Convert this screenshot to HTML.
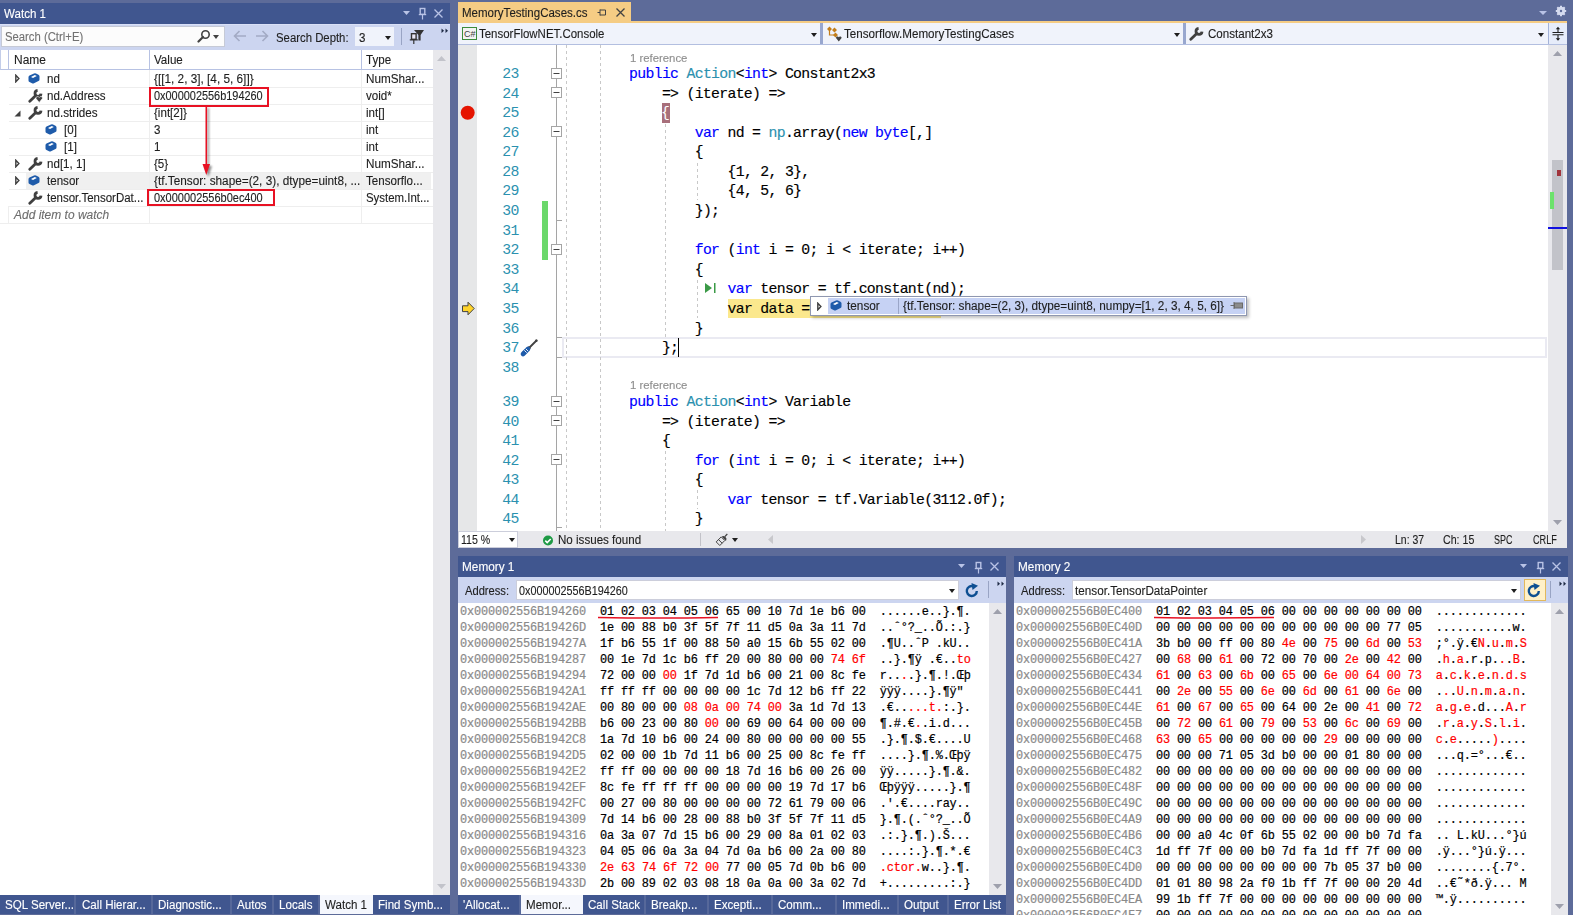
<!DOCTYPE html>
<html><head><meta charset="utf-8"><style>
*{margin:0;padding:0;box-sizing:border-box}
html,body{width:1573px;height:915px;overflow:hidden}
body{background:#5D6B99;position:relative;font-family:"Liberation Sans",sans-serif;font-size:12px}
.a{position:absolute}
.t{position:absolute;white-space:pre}
.k{color:#0000FF}.ty{color:#2B91AF}.r{color:#FF0000}
</style></head><body>

<div class="a" style="left:0px;top:3px;width:450px;height:21px;background:#40568F;"></div>
<div class="t" style="left:4.00px;top:3.84px;height:20px;line-height:20px;font-size:12px;color:#FFFFFF;font-family:'Liberation Sans',sans-serif;transform:scaleX(0.9642);transform-origin:0 0;-webkit-text-stroke:0.12px currentColor;">Watch 1</div>
<svg class="a" style="left:403px;top:11px;" width="7" height="4" viewBox="0 0 7 4"><polygon points="0,0 7,0 3.5,4" fill="#B9C3E6"/></svg>
<svg class="a" style="left:418px;top:7px;" width="9" height="13" viewBox="0 0 9 13"><rect x="2.2" y="1.5" width="4.6" height="5.8" fill="none" stroke="#B9C3E6" stroke-width="1.4"/><line x1="0.8" y1="7.6" x2="8.2" y2="7.6" stroke="#B9C3E6" stroke-width="1.2"/><line x1="4.5" y1="7.6" x2="4.5" y2="12.5" stroke="#B9C3E6" stroke-width="1.2"/></svg>
<svg class="a" style="left:434px;top:9px;" width="9" height="9" viewBox="0 0 9 9"><path d="M0.5,0.5 L8.5,8.5 M8.5,0.5 L0.5,8.5" stroke="#B9C3E6" stroke-width="1.3"/></svg>
<div class="a" style="left:0px;top:24px;width:450px;height:26px;background:#CCD5F0;border-top:1px solid #D9E0F7"></div>
<div class="a" style="left:1px;top:26px;width:224px;height:21px;background:#FCFCFC;border:1px solid #C6CAD6"></div>
<div class="t" style="left:5.00px;top:27.34px;height:20px;line-height:20px;font-size:12px;color:#717171;font-family:'Liberation Sans',sans-serif;transform:scaleX(0.9417);transform-origin:0 0;-webkit-text-stroke:0.12px currentColor;">Search (Ctrl+E)</div>
<svg class="a" style="left:197px;top:29px;" width="14" height="14" viewBox="0 0 14 14"><circle cx="8.5" cy="5.5" r="3.7" fill="none" stroke="#424242" stroke-width="1.6"/><path d="M6,8 L1.5,12.5" stroke="#424242" stroke-width="2.2" stroke-linecap="round"/></svg>
<svg class="a" style="left:213px;top:35px;" width="6" height="4" viewBox="0 0 6 4"><polygon points="0,0 6,0 3.0,4" fill="#424242"/></svg>
<svg class="a" style="left:233px;top:30px;" width="14" height="12" viewBox="0 0 14 12"><path d="M13,6 H2 M6.5,1 L1.5,6 L6.5,11" fill="none" stroke="#A3ABC5" stroke-width="1.6"/></svg>
<svg class="a" style="left:255px;top:30px;" width="14" height="12" viewBox="0 0 14 12"><path d="M1,6 H12 M7.5,1 L12.5,6 L7.5,11" fill="none" stroke="#A3ABC5" stroke-width="1.6"/></svg>
<div class="t" style="left:276.00px;top:27.84px;height:20px;line-height:20px;font-size:12px;color:#1E1E1E;font-family:'Liberation Sans',sans-serif;transform:scaleX(0.9461);transform-origin:0 0;-webkit-text-stroke:0.12px currentColor;">Search Depth:</div>
<div class="a" style="left:355px;top:27px;width:39px;height:19px;background:#F0F3FB;"></div>
<div class="t" style="left:359.00px;top:27.84px;height:20px;line-height:20px;font-size:12px;color:#1E1E1E;font-family:'Liberation Sans',sans-serif;transform:scaleX(0.9650);transform-origin:0 0;-webkit-text-stroke:0.12px currentColor;">3</div>
<svg class="a" style="left:385px;top:36px;" width="6" height="4" viewBox="0 0 6 4"><polygon points="0,0 6,0 3.0,4" fill="#1E1E1E"/></svg>
<div class="a" style="left:401px;top:28px;width:1px;height:17px;background:#99A4C4;"></div>
<svg class="a" style="left:409px;top:29px;" width="16" height="16" viewBox="0 0 16 16"><polygon points="5,1 15,1 11.6,6 11.6,11.6 9.4,11.6 9.4,6" fill="#333333"/><rect x="2.5" y="4.7" width="4.6" height="5.6" fill="#E8E6F4" stroke="#333333" stroke-width="1.4"/><path d="M0.8,10.8 H8.8 M4.8,10.8 V15" stroke="#333333" stroke-width="1.2"/></svg>
<svg class="a" style="left:441px;top:28px;" width="8" height="6" viewBox="0 0 8 6"><polygon points="0.5,0.5 3,2.8 0.5,5" fill="#1E2A44"/><polygon points="4.5,0.5 7,2.8 4.5,5" fill="#1E2A44"/></svg>
<div class="a" style="left:0px;top:50px;width:433px;height:845px;background:#FFFFFF;"></div>
<div class="a" style="left:0px;top:50px;width:433px;height:20px;background:#FFFFFF;border-bottom:1px solid #B7C2E3;border-left:1px solid #C3CDE9"></div>
<div class="a" style="left:8px;top:50px;width:1px;height:20px;background:#B7C2E3;"></div>
<div class="a" style="left:149px;top:50px;width:1px;height:20px;background:#B7C2E3;"></div>
<div class="a" style="left:361px;top:50px;width:1px;height:20px;background:#B7C2E3;"></div>
<div class="t" style="left:14.00px;top:49.54px;height:20px;line-height:20px;font-size:12px;color:#1E1E1E;font-family:'Liberation Sans',sans-serif;transform:scaleX(0.9956);transform-origin:0 0;-webkit-text-stroke:0.12px currentColor;">Name</div>
<div class="t" style="left:154.00px;top:49.54px;height:20px;line-height:20px;font-size:12px;color:#1E1E1E;font-family:'Liberation Sans',sans-serif;transform:scaleX(0.9650);transform-origin:0 0;-webkit-text-stroke:0.12px currentColor;">Value</div>
<div class="t" style="left:366.00px;top:49.54px;height:20px;line-height:20px;font-size:12px;color:#1E1E1E;font-family:'Liberation Sans',sans-serif;transform:scaleX(0.9650);transform-origin:0 0;-webkit-text-stroke:0.12px currentColor;">Type</div>
<svg class="a" style="left:15px;top:74px;" width="5" height="9" viewBox="0 0 5 9"><polygon points="0.8,1.2 3.9,4.5 0.8,7.8" fill="#FFFFFF" stroke="#404040" stroke-width="1.4"/></svg>
<svg class="a" style="left:28px;top:73px;" width="12" height="11" viewBox="0 0 12 11"><path d="M0.5,4 Q0.5,3 1.5,2.5 L6,0.5 Q7,0 8,0.5 L10.5,1.8 Q11.5,2.3 11.5,3.3 L11.5,6.5 Q11.5,7.5 10.5,8 L6,10.3 Q5,10.8 4,10.3 L1.5,9 Q0.5,8.5 0.5,7.5 Z" fill="#1E5BAA"/><path d="M3,4 L6.8,2 L8.8,3 L5,5 Z" fill="#FFFFFF"/></svg>
<div class="t" style="left:47.00px;top:68.84px;height:20px;line-height:20px;font-size:12px;color:#1E1E1E;font-family:'Liberation Sans',sans-serif;transform:scaleX(0.9650);transform-origin:0 0;-webkit-text-stroke:0.12px currentColor;">nd</div>
<div class="t" style="left:154.00px;top:68.84px;height:20px;line-height:20px;font-size:12px;color:#1E1E1E;font-family:'Liberation Sans',sans-serif;transform:scaleX(0.9822);transform-origin:0 0;-webkit-text-stroke:0.12px currentColor;">{[[1, 2, 3], [4, 5, 6]]}</div>
<div class="t" style="left:366.00px;top:68.84px;height:20px;line-height:20px;font-size:12px;color:#1E1E1E;font-family:'Liberation Sans',sans-serif;transform:scaleX(0.9767);transform-origin:0 0;-webkit-text-stroke:0.12px currentColor;">NumShar...</div>
<svg class="a" style="left:28px;top:89px;" width="15" height="14" viewBox="0 0 15 14"><path d="M1.8,12.3 L7.5,6.8" stroke="#404040" stroke-width="2.8" stroke-linecap="round"/><path d="M13,4.6 A3,3 0 1 1 9.6,1.4" fill="none" stroke="#404040" stroke-width="2.8"/><path d="M8,9.6 a1.7,1.7 0 0 1 3.2,-1.1 a1.7,1.7 0 0 1 3.2,1.1 l-3.2,3.8 z" fill="#404040" stroke="#FFFFFF" stroke-width="0.6"/></svg>
<div class="t" style="left:47.00px;top:85.89px;height:20px;line-height:20px;font-size:12px;color:#1E1E1E;font-family:'Liberation Sans',sans-serif;transform:scaleX(0.9634);transform-origin:0 0;-webkit-text-stroke:0.12px currentColor;">nd.Address</div>
<div class="t" style="left:154.00px;top:85.89px;height:20px;line-height:20px;font-size:12px;color:#1E1E1E;font-family:'Liberation Sans',sans-serif;transform:scaleX(0.9099);transform-origin:0 0;-webkit-text-stroke:0.12px currentColor;">0x000002556b194260</div>
<div class="t" style="left:366.00px;top:85.89px;height:20px;line-height:20px;font-size:12px;color:#1E1E1E;font-family:'Liberation Sans',sans-serif;transform:scaleX(0.9650);transform-origin:0 0;-webkit-text-stroke:0.12px currentColor;">void*</div>
<svg class="a" style="left:14px;top:110px;" width="7" height="7" viewBox="0 0 7 7"><polygon points="6.5,0.5 6.5,6.5 0.5,6.5" fill="#404040"/></svg>
<svg class="a" style="left:28px;top:106px;" width="15" height="14" viewBox="0 0 15 14"><path d="M1.8,12.3 L7.5,6.8" stroke="#404040" stroke-width="2.8" stroke-linecap="round"/><path d="M13,4.6 A3,3 0 1 1 9.6,1.4" fill="none" stroke="#404040" stroke-width="2.8"/></svg>
<div class="t" style="left:47.00px;top:102.94px;height:20px;line-height:20px;font-size:12px;color:#1E1E1E;font-family:'Liberation Sans',sans-serif;transform:scaleX(0.9727);transform-origin:0 0;-webkit-text-stroke:0.12px currentColor;">nd.strides</div>
<div class="t" style="left:154.00px;top:102.94px;height:20px;line-height:20px;font-size:12px;color:#1E1E1E;font-family:'Liberation Sans',sans-serif;transform:scaleX(0.9650);transform-origin:0 0;-webkit-text-stroke:0.12px currentColor;">{int[2]}</div>
<div class="t" style="left:366.00px;top:102.94px;height:20px;line-height:20px;font-size:12px;color:#1E1E1E;font-family:'Liberation Sans',sans-serif;transform:scaleX(0.9650);transform-origin:0 0;-webkit-text-stroke:0.12px currentColor;">int[]</div>
<svg class="a" style="left:45px;top:124px;" width="12" height="11" viewBox="0 0 12 11"><path d="M0.5,4 Q0.5,3 1.5,2.5 L6,0.5 Q7,0 8,0.5 L10.5,1.8 Q11.5,2.3 11.5,3.3 L11.5,6.5 Q11.5,7.5 10.5,8 L6,10.3 Q5,10.8 4,10.3 L1.5,9 Q0.5,8.5 0.5,7.5 Z" fill="#1E5BAA"/><path d="M3,4 L6.8,2 L8.8,3 L5,5 Z" fill="#FFFFFF"/></svg>
<div class="t" style="left:64.00px;top:119.99px;height:20px;line-height:20px;font-size:12px;color:#1E1E1E;font-family:'Liberation Sans',sans-serif;transform:scaleX(0.9650);transform-origin:0 0;-webkit-text-stroke:0.12px currentColor;">[0]</div>
<div class="t" style="left:154.00px;top:119.99px;height:20px;line-height:20px;font-size:12px;color:#1E1E1E;font-family:'Liberation Sans',sans-serif;transform:scaleX(0.9650);transform-origin:0 0;-webkit-text-stroke:0.12px currentColor;">3</div>
<div class="t" style="left:366.00px;top:119.99px;height:20px;line-height:20px;font-size:12px;color:#1E1E1E;font-family:'Liberation Sans',sans-serif;transform:scaleX(0.9650);transform-origin:0 0;-webkit-text-stroke:0.12px currentColor;">int</div>
<svg class="a" style="left:45px;top:141px;" width="12" height="11" viewBox="0 0 12 11"><path d="M0.5,4 Q0.5,3 1.5,2.5 L6,0.5 Q7,0 8,0.5 L10.5,1.8 Q11.5,2.3 11.5,3.3 L11.5,6.5 Q11.5,7.5 10.5,8 L6,10.3 Q5,10.8 4,10.3 L1.5,9 Q0.5,8.5 0.5,7.5 Z" fill="#1E5BAA"/><path d="M3,4 L6.8,2 L8.8,3 L5,5 Z" fill="#FFFFFF"/></svg>
<div class="t" style="left:64.00px;top:137.04px;height:20px;line-height:20px;font-size:12px;color:#1E1E1E;font-family:'Liberation Sans',sans-serif;transform:scaleX(0.9650);transform-origin:0 0;-webkit-text-stroke:0.12px currentColor;">[1]</div>
<div class="t" style="left:154.00px;top:137.04px;height:20px;line-height:20px;font-size:12px;color:#1E1E1E;font-family:'Liberation Sans',sans-serif;transform:scaleX(0.9650);transform-origin:0 0;-webkit-text-stroke:0.12px currentColor;">1</div>
<div class="t" style="left:366.00px;top:137.04px;height:20px;line-height:20px;font-size:12px;color:#1E1E1E;font-family:'Liberation Sans',sans-serif;transform:scaleX(0.9650);transform-origin:0 0;-webkit-text-stroke:0.12px currentColor;">int</div>
<svg class="a" style="left:15px;top:159px;" width="5" height="9" viewBox="0 0 5 9"><polygon points="0.8,1.2 3.9,4.5 0.8,7.8" fill="#FFFFFF" stroke="#404040" stroke-width="1.4"/></svg>
<svg class="a" style="left:28px;top:157px;" width="15" height="14" viewBox="0 0 15 14"><path d="M1.8,12.3 L7.5,6.8" stroke="#404040" stroke-width="2.8" stroke-linecap="round"/><path d="M13,4.6 A3,3 0 1 1 9.6,1.4" fill="none" stroke="#404040" stroke-width="2.8"/></svg>
<div class="t" style="left:47.00px;top:154.09px;height:20px;line-height:20px;font-size:12px;color:#1E1E1E;font-family:'Liberation Sans',sans-serif;transform:scaleX(0.9650);transform-origin:0 0;-webkit-text-stroke:0.12px currentColor;">nd[1, 1]</div>
<div class="t" style="left:154.00px;top:154.09px;height:20px;line-height:20px;font-size:12px;color:#1E1E1E;font-family:'Liberation Sans',sans-serif;transform:scaleX(0.9650);transform-origin:0 0;-webkit-text-stroke:0.12px currentColor;">{5}</div>
<div class="t" style="left:366.00px;top:154.09px;height:20px;line-height:20px;font-size:12px;color:#1E1E1E;font-family:'Liberation Sans',sans-serif;transform:scaleX(0.9767);transform-origin:0 0;-webkit-text-stroke:0.12px currentColor;">NumShar...</div>
<div class="a" style="left:26px;top:172px;width:405px;height:17px;background:#F0F0F0;"></div>
<svg class="a" style="left:15px;top:176px;" width="5" height="9" viewBox="0 0 5 9"><polygon points="0.8,1.2 3.9,4.5 0.8,7.8" fill="#FFFFFF" stroke="#404040" stroke-width="1.4"/></svg>
<svg class="a" style="left:28px;top:175px;" width="12" height="11" viewBox="0 0 12 11"><path d="M0.5,4 Q0.5,3 1.5,2.5 L6,0.5 Q7,0 8,0.5 L10.5,1.8 Q11.5,2.3 11.5,3.3 L11.5,6.5 Q11.5,7.5 10.5,8 L6,10.3 Q5,10.8 4,10.3 L1.5,9 Q0.5,8.5 0.5,7.5 Z" fill="#1E5BAA"/><path d="M3,4 L6.8,2 L8.8,3 L5,5 Z" fill="#FFFFFF"/></svg>
<div class="t" style="left:47.00px;top:171.14px;height:20px;line-height:20px;font-size:12px;color:#1E1E1E;font-family:'Liberation Sans',sans-serif;transform:scaleX(0.9650);transform-origin:0 0;-webkit-text-stroke:0.12px currentColor;">tensor</div>
<div class="t" style="left:154.00px;top:171.14px;height:20px;line-height:20px;font-size:12px;color:#1E1E1E;font-family:'Liberation Sans',sans-serif;transform:scaleX(0.9818);transform-origin:0 0;-webkit-text-stroke:0.12px currentColor;">{tf.Tensor: shape=(2, 3), dtype=uint8, ...</div>
<div class="t" style="left:366.00px;top:171.14px;height:20px;line-height:20px;font-size:12px;color:#1E1E1E;font-family:'Liberation Sans',sans-serif;transform:scaleX(0.9646);transform-origin:0 0;-webkit-text-stroke:0.12px currentColor;">Tensorflo...</div>
<svg class="a" style="left:28px;top:191px;" width="15" height="14" viewBox="0 0 15 14"><path d="M1.8,12.3 L7.5,6.8" stroke="#404040" stroke-width="2.8" stroke-linecap="round"/><path d="M13,4.6 A3,3 0 1 1 9.6,1.4" fill="none" stroke="#404040" stroke-width="2.8"/></svg>
<div class="t" style="left:47.00px;top:188.19px;height:20px;line-height:20px;font-size:12px;color:#1E1E1E;font-family:'Liberation Sans',sans-serif;transform:scaleX(0.9569);transform-origin:0 0;-webkit-text-stroke:0.12px currentColor;">tensor.TensorDat...</div>
<div class="t" style="left:154.00px;top:188.19px;height:20px;line-height:20px;font-size:12px;color:#1E1E1E;font-family:'Liberation Sans',sans-serif;transform:scaleX(0.9150);transform-origin:0 0;-webkit-text-stroke:0.12px currentColor;">0x000002556b0ec400</div>
<div class="t" style="left:366.00px;top:188.19px;height:20px;line-height:20px;font-size:12px;color:#1E1E1E;font-family:'Liberation Sans',sans-serif;transform:scaleX(0.9526);transform-origin:0 0;-webkit-text-stroke:0.12px currentColor;">System.Int...</div>
<div class="a" style="left:9px;top:87px;width:424px;height:1px;background:#EEEEEE;"></div>
<div class="a" style="left:9px;top:104px;width:424px;height:1px;background:#EEEEEE;"></div>
<div class="a" style="left:9px;top:121px;width:424px;height:1px;background:#EEEEEE;"></div>
<div class="a" style="left:9px;top:138px;width:424px;height:1px;background:#EEEEEE;"></div>
<div class="a" style="left:9px;top:155px;width:424px;height:1px;background:#EEEEEE;"></div>
<div class="a" style="left:9px;top:172px;width:424px;height:1px;background:#EEEEEE;"></div>
<div class="a" style="left:9px;top:189px;width:424px;height:1px;background:#EEEEEE;"></div>
<div class="a" style="left:9px;top:206px;width:424px;height:1px;background:#EEEEEE;"></div>
<div class="a" style="left:0px;top:223px;width:433px;height:1px;background:#EEEEEE;"></div>
<div class="a" style="left:8px;top:206px;width:1px;height:17px;background:#EEEEEE;"></div>
<div class="a" style="left:149px;top:70px;width:1px;height:154px;background:#EEEEEE;"></div>
<div class="a" style="left:361px;top:70px;width:1px;height:154px;background:#EEEEEE;"></div>
<div class="t" style="left:13.60px;top:205.24px;height:20px;line-height:20px;font-size:12px;color:#6D6D6D;font-family:'Liberation Sans',sans-serif;font-style:italic;transform:scaleX(0.9979);transform-origin:0 0;-webkit-text-stroke:0.12px currentColor;">Add item to watch</div>
<div class="a" style="left:149px;top:87px;width:120px;height:20px;background:transparent;border:2px solid #E81123"></div>
<div class="a" style="left:147px;top:189px;width:128px;height:17px;background:transparent;border:2px solid #E81123"></div>
<svg class="a" style="left:198px;top:105px;" width="20" height="75" viewBox="0 0 20 75"><defs><filter id="sh" x="-50%" y="-10%" width="200%" height="130%"><feGaussianBlur stdDeviation="1.2"/></filter></defs><g filter="url(#sh)" opacity="0.45" transform="translate(2,2)"><path d="M8.3,1 V60" stroke="#000" stroke-width="1.6"/><polygon points="4.5,59 12,59 8.3,70" fill="#000"/></g><path d="M8.3,1 V60" stroke="#E81123" stroke-width="1.6"/><polygon points="4.5,59 12,59 8.3,70" fill="#E81123"/></svg>
<div class="a" style="left:433px;top:50px;width:17px;height:845px;background:#E8E8EC;"></div>
<svg class="a" style="left:437px;top:56px;" width="9" height="5" viewBox="0 0 9 5"><polygon points="0,5 4.5,0 9,5" fill="#C2C3CA"/></svg>
<svg class="a" style="left:437px;top:884px;" width="9" height="5" viewBox="0 0 9 5"><polygon points="0,0 9,0 4.5,5" fill="#C2C3CA"/></svg>
<div class="a" style="left:0px;top:895px;width:450px;height:19px;background:#40568F;"></div>
<div class="a" style="left:0px;top:895px;width:76px;height:19px;background:#40568F;border-right:2px solid #56689A"></div>
<div class="t" style="left:5.00px;top:894.64px;height:20px;line-height:20px;font-size:12px;color:#FFFFFF;font-family:'Liberation Sans',sans-serif;transform:scaleX(0.9650);transform-origin:0 0;-webkit-text-stroke:0.12px currentColor;">SQL Server...</div>
<div class="a" style="left:77px;top:895px;width:76px;height:19px;background:#40568F;border-right:2px solid #56689A"></div>
<div class="t" style="left:82.00px;top:894.64px;height:20px;line-height:20px;font-size:12px;color:#FFFFFF;font-family:'Liberation Sans',sans-serif;transform:scaleX(0.9650);transform-origin:0 0;-webkit-text-stroke:0.12px currentColor;">Call Hierar...</div>
<div class="a" style="left:153px;top:895px;width:79px;height:19px;background:#40568F;border-right:2px solid #56689A"></div>
<div class="t" style="left:158.00px;top:894.64px;height:20px;line-height:20px;font-size:12px;color:#FFFFFF;font-family:'Liberation Sans',sans-serif;transform:scaleX(0.9650);transform-origin:0 0;-webkit-text-stroke:0.12px currentColor;">Diagnostic...</div>
<div class="a" style="left:232px;top:895px;width:42px;height:19px;background:#40568F;border-right:2px solid #56689A"></div>
<div class="t" style="left:237.00px;top:894.64px;height:20px;line-height:20px;font-size:12px;color:#FFFFFF;font-family:'Liberation Sans',sans-serif;transform:scaleX(0.9650);transform-origin:0 0;-webkit-text-stroke:0.12px currentColor;">Autos</div>
<div class="a" style="left:274px;top:895px;width:46px;height:19px;background:#40568F;border-right:2px solid #56689A"></div>
<div class="t" style="left:279.00px;top:894.64px;height:20px;line-height:20px;font-size:12px;color:#FFFFFF;font-family:'Liberation Sans',sans-serif;transform:scaleX(0.9650);transform-origin:0 0;-webkit-text-stroke:0.12px currentColor;">Locals</div>
<div class="a" style="left:320px;top:895px;width:53px;height:19px;background:#F5F7FD;"></div>
<div class="t" style="left:325.00px;top:894.64px;height:20px;line-height:20px;font-size:12px;color:#1E1E1E;font-family:'Liberation Sans',sans-serif;transform:scaleX(0.9650);transform-origin:0 0;-webkit-text-stroke:0.12px currentColor;">Watch 1</div>
<div class="a" style="left:373px;top:895px;width:77px;height:19px;background:#40568F;"></div>
<div class="t" style="left:378.00px;top:894.64px;height:20px;line-height:20px;font-size:12px;color:#FFFFFF;font-family:'Liberation Sans',sans-serif;transform:scaleX(0.9650);transform-origin:0 0;-webkit-text-stroke:0.12px currentColor;">Find Symb...</div>
<div class="a" style="left:458px;top:2px;width:173px;height:19px;background:#F5CC84;"></div>
<div class="t" style="left:461.50px;top:2.84px;height:20px;line-height:20px;font-size:12px;color:#1E1E1E;font-family:'Liberation Sans',sans-serif;transform:scaleX(0.9604);transform-origin:0 0;-webkit-text-stroke:0.12px currentColor;">MemoryTestingCases.cs</div>
<svg class="a" style="left:597px;top:8px;" width="10" height="9" viewBox="0 0 10 9"><path d="M0.5,4.5 H3 M3,1.5 V7.5 M3,2 H8.5 V7 H3" fill="none" stroke="#424242" stroke-width="1"/></svg>
<svg class="a" style="left:616px;top:8px;" width="9" height="9" viewBox="0 0 9 9"><path d="M0.5,0.5 L8.5,8.5 M8.5,0.5 L0.5,8.5" stroke="#424242" stroke-width="1.3"/></svg>
<svg class="a" style="left:1539px;top:11px;" width="8" height="4" viewBox="0 0 8 4"><polygon points="0,0 8,0 4.0,4" fill="#B9C3E6"/></svg>
<svg class="a" style="left:1555px;top:5px;" width="12" height="12" viewBox="0 0 12 12"><circle cx="6" cy="6" r="3.2" fill="none" stroke="#D5DBEF" stroke-width="2"/><path d="M6,0.8 V11.2 M0.8,6 H11.2 M2.3,2.3 L9.7,9.7 M9.7,2.3 L2.3,9.7" stroke="#D5DBEF" stroke-width="2"/><circle cx="6" cy="6" r="1.2" fill="#5D6B99"/></svg>
<div class="a" style="left:458px;top:21px;width:1109px;height:2px;background:#F5CC84;"></div>
<div class="a" style="left:458px;top:23px;width:1109px;height:22px;background:#F0F3FB;border-bottom:1px solid #B3BFE0"></div>
<svg class="a" style="left:462px;top:27px;" width="15" height="13" viewBox="0 0 15 13"><rect x="0.5" y="0.5" width="14" height="12" fill="#F3F3F3" stroke="#3C8C3C" stroke-width="1"/><text x="2" y="10" font-family="Liberation Sans" font-size="9" fill="#424242">C#</text></svg>
<div class="t" style="left:479.40px;top:23.84px;height:20px;line-height:20px;font-size:12px;color:#1E1E1E;font-family:'Liberation Sans',sans-serif;transform:scaleX(0.9551);transform-origin:0 0;-webkit-text-stroke:0.12px currentColor;">TensorFlowNET.Console</div>
<svg class="a" style="left:811px;top:33px;" width="6" height="4" viewBox="0 0 6 4"><polygon points="0,0 6,0 3.0,4" fill="#1E1E1E"/></svg>
<div class="a" style="left:820px;top:23px;width:3px;height:21px;background:#98A7CF;"></div>
<svg class="a" style="left:826px;top:26px;" width="16" height="16" viewBox="0 0 16 16"><path d="M1,3 L3.5,0.5 L6,3 L3.5,5.5 Z M6,4 L8.5,1.5 L11,4 L8.5,6.5 Z M7,9 L9.5,6.5 L12,9 L9.5,11.5 Z" fill="#C27D1A"/><path d="M3.5,5 V9 H8" stroke="#C27D1A" stroke-width="1.2" fill="none"/><path d="M10,12 a1.5,1.5 0 0 1 2.8,-0.8 a1.5,1.5 0 0 1 2.8,0.8 l-2.8,3.5 z" fill="#424242"/></svg>
<div class="t" style="left:844.30px;top:23.84px;height:20px;line-height:20px;font-size:12px;color:#1E1E1E;font-family:'Liberation Sans',sans-serif;transform:scaleX(0.9699);transform-origin:0 0;-webkit-text-stroke:0.12px currentColor;">Tensorflow.MemoryTestingCases</div>
<svg class="a" style="left:1174px;top:33px;" width="6" height="4" viewBox="0 0 6 4"><polygon points="0,0 6,0 3.0,4" fill="#1E1E1E"/></svg>
<div class="a" style="left:1183px;top:23px;width:3px;height:21px;background:#98A7CF;"></div>
<svg class="a" style="left:1189px;top:27px;" width="15" height="14" viewBox="0 0 15 14"><path d="M1.8,12.3 L7.5,6.8" stroke="#404040" stroke-width="2.8" stroke-linecap="round"/><path d="M13,4.6 A3,3 0 1 1 9.6,1.4" fill="none" stroke="#404040" stroke-width="2.8"/></svg>
<div class="t" style="left:1207.50px;top:23.84px;height:20px;line-height:20px;font-size:12px;color:#1E1E1E;font-family:'Liberation Sans',sans-serif;transform:scaleX(0.9647);transform-origin:0 0;-webkit-text-stroke:0.12px currentColor;">Constant2x3</div>
<svg class="a" style="left:1538px;top:33px;" width="6" height="4" viewBox="0 0 6 4"><polygon points="0,0 6,0 3.0,4" fill="#1E1E1E"/></svg>
<div class="a" style="left:1549px;top:23px;width:18px;height:21px;background:#E6ECFA;"></div>
<div class="a" style="left:1548px;top:23px;width:1px;height:21px;background:#A3B2D8;"></div>
<svg class="a" style="left:1551px;top:26px;" width="14" height="16" viewBox="0 0 14 16"><path d="M1.5,6.5 H12.5 M1.5,8.7 H12.5" stroke="#1E1E1E" stroke-width="1.1"/><path d="M7,2 V6 M7,9 V13.5" fill="none" stroke="#1E1E1E" stroke-width="1.1"/><polygon points="4.8,3.3 7,0.8 9.2,3.3" fill="#1E1E1E"/><polygon points="4.8,12.2 7,14.7 9.2,12.2" fill="#1E1E1E"/></svg>
<div class="a" style="left:458px;top:45px;width:1090px;height:486px;background:#FFFFFF;"></div>
<div class="a" style="left:458px;top:45px;width:19px;height:486px;background:#E6E7E8;"></div>
<div class="a" style="left:562px;top:337px;width:985px;height:21px;background:transparent;border:2px solid #EAEAF2"></div>
<div class="a" style="left:566px;top:45px;width:1px;height:486px;background:repeating-linear-gradient(#C8C8C8 0 3px,transparent 3px 6px)"></div>
<div class="a" style="left:600px;top:45px;width:1px;height:486px;background:repeating-linear-gradient(#C8C8C8 0 3px,transparent 3px 6px)"></div>
<div class="a" style="left:665px;top:124px;width:1px;height:213px;background:repeating-linear-gradient(#C8C8C8 0 3px,transparent 3px 6px)"></div>
<div class="a" style="left:697px;top:163px;width:1px;height:37px;background:repeating-linear-gradient(#C8C8C8 0 3px,transparent 3px 6px)"></div>
<div class="a" style="left:697px;top:280px;width:1px;height:38px;background:repeating-linear-gradient(#C8C8C8 0 3px,transparent 3px 6px)"></div>
<div class="a" style="left:665px;top:451px;width:1px;height:80px;background:repeating-linear-gradient(#C8C8C8 0 3px,transparent 3px 6px)"></div>
<div class="a" style="left:697px;top:490px;width:1px;height:19px;background:repeating-linear-gradient(#C8C8C8 0 3px,transparent 3px 6px)"></div>
<div class="a" style="left:556px;top:45px;width:1px;height:486px;background:#A5A5A5;"></div>
<svg class="a" style="left:551px;top:68px;" width="11" height="11" viewBox="0 0 11 11"><rect x="0.5" y="0.5" width="10" height="10" fill="#FFFFFF" stroke="#A5A5A5"/><path d="M2.5,5.5 H8.5" stroke="#424242" stroke-width="1"/></svg>
<svg class="a" style="left:551px;top:87px;" width="11" height="11" viewBox="0 0 11 11"><rect x="0.5" y="0.5" width="10" height="10" fill="#FFFFFF" stroke="#A5A5A5"/><path d="M2.5,5.5 H8.5" stroke="#424242" stroke-width="1"/></svg>
<svg class="a" style="left:551px;top:126px;" width="11" height="11" viewBox="0 0 11 11"><rect x="0.5" y="0.5" width="10" height="10" fill="#FFFFFF" stroke="#A5A5A5"/><path d="M2.5,5.5 H8.5" stroke="#424242" stroke-width="1"/></svg>
<svg class="a" style="left:551px;top:244px;" width="11" height="11" viewBox="0 0 11 11"><rect x="0.5" y="0.5" width="10" height="10" fill="#FFFFFF" stroke="#A5A5A5"/><path d="M2.5,5.5 H8.5" stroke="#424242" stroke-width="1"/></svg>
<svg class="a" style="left:551px;top:396px;" width="11" height="11" viewBox="0 0 11 11"><rect x="0.5" y="0.5" width="10" height="10" fill="#FFFFFF" stroke="#A5A5A5"/><path d="M2.5,5.5 H8.5" stroke="#424242" stroke-width="1"/></svg>
<svg class="a" style="left:551px;top:415px;" width="11" height="11" viewBox="0 0 11 11"><rect x="0.5" y="0.5" width="10" height="10" fill="#FFFFFF" stroke="#A5A5A5"/><path d="M2.5,5.5 H8.5" stroke="#424242" stroke-width="1"/></svg>
<svg class="a" style="left:551px;top:454px;" width="11" height="11" viewBox="0 0 11 11"><rect x="0.5" y="0.5" width="10" height="10" fill="#FFFFFF" stroke="#A5A5A5"/><path d="M2.5,5.5 H8.5" stroke="#424242" stroke-width="1"/></svg>
<div class="a" style="left:556px;top:220px;width:6px;height:1px;background:#A5A5A5;"></div>
<div class="a" style="left:556px;top:337px;width:6px;height:1px;background:#A5A5A5;"></div>
<div class="a" style="left:556px;top:357px;width:6px;height:1px;background:#A5A5A5;"></div>
<div class="a" style="left:556px;top:527px;width:6px;height:1px;background:#A5A5A5;"></div>
<div class="a" style="left:542px;top:201px;width:6px;height:59px;background:#6BD86B;"></div>
<div class="t" style="left:502.30px;top:64.06px;height:20px;line-height:20px;font-size:14.8px;color:#2B91AF;font-family:'Liberation Mono',monospace;letter-spacing:-0.683px">23</div>
<div class="t" style="left:502.30px;top:84.06px;height:20px;line-height:20px;font-size:14.8px;color:#2B91AF;font-family:'Liberation Mono',monospace;letter-spacing:-0.683px">24</div>
<div class="t" style="left:502.30px;top:103.06px;height:20px;line-height:20px;font-size:14.8px;color:#2B91AF;font-family:'Liberation Mono',monospace;letter-spacing:-0.683px">25</div>
<div class="t" style="left:502.30px;top:123.06px;height:20px;line-height:20px;font-size:14.8px;color:#2B91AF;font-family:'Liberation Mono',monospace;letter-spacing:-0.683px">26</div>
<div class="t" style="left:502.30px;top:142.06px;height:20px;line-height:20px;font-size:14.8px;color:#2B91AF;font-family:'Liberation Mono',monospace;letter-spacing:-0.683px">27</div>
<div class="t" style="left:502.30px;top:162.06px;height:20px;line-height:20px;font-size:14.8px;color:#2B91AF;font-family:'Liberation Mono',monospace;letter-spacing:-0.683px">28</div>
<div class="t" style="left:502.30px;top:181.06px;height:20px;line-height:20px;font-size:14.8px;color:#2B91AF;font-family:'Liberation Mono',monospace;letter-spacing:-0.683px">29</div>
<div class="t" style="left:502.30px;top:201.06px;height:20px;line-height:20px;font-size:14.8px;color:#2B91AF;font-family:'Liberation Mono',monospace;letter-spacing:-0.683px">30</div>
<div class="t" style="left:502.30px;top:221.06px;height:20px;line-height:20px;font-size:14.8px;color:#2B91AF;font-family:'Liberation Mono',monospace;letter-spacing:-0.683px">31</div>
<div class="t" style="left:502.30px;top:240.06px;height:20px;line-height:20px;font-size:14.8px;color:#2B91AF;font-family:'Liberation Mono',monospace;letter-spacing:-0.683px">32</div>
<div class="t" style="left:502.30px;top:260.06px;height:20px;line-height:20px;font-size:14.8px;color:#2B91AF;font-family:'Liberation Mono',monospace;letter-spacing:-0.683px">33</div>
<div class="t" style="left:502.30px;top:279.06px;height:20px;line-height:20px;font-size:14.8px;color:#2B91AF;font-family:'Liberation Mono',monospace;letter-spacing:-0.683px">34</div>
<div class="t" style="left:502.30px;top:299.06px;height:20px;line-height:20px;font-size:14.8px;color:#2B91AF;font-family:'Liberation Mono',monospace;letter-spacing:-0.683px">35</div>
<div class="t" style="left:502.30px;top:319.06px;height:20px;line-height:20px;font-size:14.8px;color:#2B91AF;font-family:'Liberation Mono',monospace;letter-spacing:-0.683px">36</div>
<div class="t" style="left:502.30px;top:338.06px;height:20px;line-height:20px;font-size:14.8px;color:#2B91AF;font-family:'Liberation Mono',monospace;letter-spacing:-0.683px">37</div>
<div class="t" style="left:502.30px;top:358.06px;height:20px;line-height:20px;font-size:14.8px;color:#2B91AF;font-family:'Liberation Mono',monospace;letter-spacing:-0.683px">38</div>
<div class="t" style="left:502.30px;top:392.06px;height:20px;line-height:20px;font-size:14.8px;color:#2B91AF;font-family:'Liberation Mono',monospace;letter-spacing:-0.683px">39</div>
<div class="t" style="left:502.30px;top:412.06px;height:20px;line-height:20px;font-size:14.8px;color:#2B91AF;font-family:'Liberation Mono',monospace;letter-spacing:-0.683px">40</div>
<div class="t" style="left:502.30px;top:431.06px;height:20px;line-height:20px;font-size:14.8px;color:#2B91AF;font-family:'Liberation Mono',monospace;letter-spacing:-0.683px">41</div>
<div class="t" style="left:502.30px;top:451.06px;height:20px;line-height:20px;font-size:14.8px;color:#2B91AF;font-family:'Liberation Mono',monospace;letter-spacing:-0.683px">42</div>
<div class="t" style="left:502.30px;top:470.06px;height:20px;line-height:20px;font-size:14.8px;color:#2B91AF;font-family:'Liberation Mono',monospace;letter-spacing:-0.683px">43</div>
<div class="t" style="left:502.30px;top:490.06px;height:20px;line-height:20px;font-size:14.8px;color:#2B91AF;font-family:'Liberation Mono',monospace;letter-spacing:-0.683px">44</div>
<div class="t" style="left:502.30px;top:509.06px;height:20px;line-height:20px;font-size:14.8px;color:#2B91AF;font-family:'Liberation Mono',monospace;letter-spacing:-0.683px">45</div>
<svg class="a" style="left:460px;top:105px;" width="16" height="16" viewBox="0 0 16 16"><circle cx="7.7" cy="7.8" r="7" fill="#E51400"/></svg>
<svg class="a" style="left:461px;top:301px;" width="16" height="15" viewBox="0 0 16 15"><path d="M1.5,4.8 H7 V1.2 L13.2,7.5 L7,13.8 V10.6 H1.5 Z" fill="#FFD42A" stroke="#424242" stroke-width="1" stroke-linejoin="round"/></svg>
<svg class="a" style="left:519px;top:338px;" width="20" height="20" viewBox="0 0 20 20"><path d="M17.5,2.5 L10,10" stroke="#424242" stroke-width="1.8" stroke-linecap="round"/><circle cx="17.3" cy="2.7" r="1.3" fill="#424242"/><path d="M11,9 L9,11" stroke="#424242" stroke-width="3"/><path d="M9,11 L4,16" stroke="#1E5BAA" stroke-width="4.6" stroke-linecap="round"/><path d="M5.3,12.3 L7.7,14.7 M6.8,10.8 L9.2,13.2" stroke="#FFFFFF" stroke-width="0.9"/></svg>
<div class="t" style="left:629.70px;top:47.99px;height:20px;line-height:20px;font-size:11px;color:#8E8E8E;font-family:'Liberation Sans',sans-serif;transform:scaleX(1.0313);transform-origin:0 0;-webkit-text-stroke:0.12px currentColor;">1 reference</div>
<div class="t" style="left:629.70px;top:375.29px;height:20px;line-height:20px;font-size:11px;color:#8E8E8E;font-family:'Liberation Sans',sans-serif;transform:scaleX(1.0313);transform-origin:0 0;-webkit-text-stroke:0.12px currentColor;">1 reference</div>
<div class="a" style="left:662px;top:103px;width:8px;height:20px;background:#A86F7B;"></div>
<div class="a" style="left:728px;top:299px;width:213px;height:19px;background:#FBE88D;"></div>
<div class="t" style="left:629.10px;top:64.06px;height:20px;line-height:20px;font-size:14.8px;color:#0000FF;font-family:'Liberation Mono',monospace;letter-spacing:-0.683px;-webkit-text-stroke:0.15px currentColor">public</div>
<div class="t" style="left:686.50px;top:64.06px;height:20px;line-height:20px;font-size:14.8px;color:#2B91AF;font-family:'Liberation Mono',monospace;letter-spacing:-0.683px;-webkit-text-stroke:0.15px currentColor">Action</div>
<div class="t" style="left:735.70px;top:64.06px;height:20px;line-height:20px;font-size:14.8px;color:#000000;font-family:'Liberation Mono',monospace;letter-spacing:-0.683px;-webkit-text-stroke:0.15px currentColor">&lt;</div>
<div class="t" style="left:743.90px;top:64.06px;height:20px;line-height:20px;font-size:14.8px;color:#0000FF;font-family:'Liberation Mono',monospace;letter-spacing:-0.683px;-webkit-text-stroke:0.15px currentColor">int</div>
<div class="t" style="left:768.50px;top:64.06px;height:20px;line-height:20px;font-size:14.8px;color:#000000;font-family:'Liberation Mono',monospace;letter-spacing:-0.683px;-webkit-text-stroke:0.15px currentColor">&gt; Constant2x3</div>
<div class="t" style="left:661.90px;top:84.06px;height:20px;line-height:20px;font-size:14.8px;color:#000000;font-family:'Liberation Mono',monospace;letter-spacing:-0.683px;-webkit-text-stroke:0.15px currentColor">=&gt; (iterate) =&gt;</div>
<div class="t" style="left:694.70px;top:123.06px;height:20px;line-height:20px;font-size:14.8px;color:#0000FF;font-family:'Liberation Mono',monospace;letter-spacing:-0.683px;-webkit-text-stroke:0.15px currentColor">var</div>
<div class="t" style="left:727.50px;top:123.06px;height:20px;line-height:20px;font-size:14.8px;color:#000000;font-family:'Liberation Mono',monospace;letter-spacing:-0.683px;-webkit-text-stroke:0.15px currentColor">nd = </div>
<div class="t" style="left:768.50px;top:123.06px;height:20px;line-height:20px;font-size:14.8px;color:#2B91AF;font-family:'Liberation Mono',monospace;letter-spacing:-0.683px;-webkit-text-stroke:0.15px currentColor">np</div>
<div class="t" style="left:784.90px;top:123.06px;height:20px;line-height:20px;font-size:14.8px;color:#000000;font-family:'Liberation Mono',monospace;letter-spacing:-0.683px;-webkit-text-stroke:0.15px currentColor">.array(</div>
<div class="t" style="left:842.30px;top:123.06px;height:20px;line-height:20px;font-size:14.8px;color:#0000FF;font-family:'Liberation Mono',monospace;letter-spacing:-0.683px;-webkit-text-stroke:0.15px currentColor">new</div>
<div class="t" style="left:875.10px;top:123.06px;height:20px;line-height:20px;font-size:14.8px;color:#0000FF;font-family:'Liberation Mono',monospace;letter-spacing:-0.683px;-webkit-text-stroke:0.15px currentColor">byte</div>
<div class="t" style="left:907.90px;top:123.06px;height:20px;line-height:20px;font-size:14.8px;color:#000000;font-family:'Liberation Mono',monospace;letter-spacing:-0.683px;-webkit-text-stroke:0.15px currentColor">[,]</div>
<div class="t" style="left:694.70px;top:142.06px;height:20px;line-height:20px;font-size:14.8px;color:#000000;font-family:'Liberation Mono',monospace;letter-spacing:-0.683px;-webkit-text-stroke:0.15px currentColor">{</div>
<div class="t" style="left:727.50px;top:162.06px;height:20px;line-height:20px;font-size:14.8px;color:#000000;font-family:'Liberation Mono',monospace;letter-spacing:-0.683px;-webkit-text-stroke:0.15px currentColor">{1, 2, 3},</div>
<div class="t" style="left:727.50px;top:181.06px;height:20px;line-height:20px;font-size:14.8px;color:#000000;font-family:'Liberation Mono',monospace;letter-spacing:-0.683px;-webkit-text-stroke:0.15px currentColor">{4, 5, 6}</div>
<div class="t" style="left:694.70px;top:201.06px;height:20px;line-height:20px;font-size:14.8px;color:#000000;font-family:'Liberation Mono',monospace;letter-spacing:-0.683px;-webkit-text-stroke:0.15px currentColor">});</div>
<div class="t" style="left:694.70px;top:240.06px;height:20px;line-height:20px;font-size:14.8px;color:#0000FF;font-family:'Liberation Mono',monospace;letter-spacing:-0.683px;-webkit-text-stroke:0.15px currentColor">for</div>
<div class="t" style="left:727.50px;top:240.06px;height:20px;line-height:20px;font-size:14.8px;color:#000000;font-family:'Liberation Mono',monospace;letter-spacing:-0.683px;-webkit-text-stroke:0.15px currentColor">(</div>
<div class="t" style="left:735.70px;top:240.06px;height:20px;line-height:20px;font-size:14.8px;color:#0000FF;font-family:'Liberation Mono',monospace;letter-spacing:-0.683px;-webkit-text-stroke:0.15px currentColor">int</div>
<div class="t" style="left:768.50px;top:240.06px;height:20px;line-height:20px;font-size:14.8px;color:#000000;font-family:'Liberation Mono',monospace;letter-spacing:-0.683px;-webkit-text-stroke:0.15px currentColor">i = 0; i &lt; iterate; i++)</div>
<div class="t" style="left:694.70px;top:260.06px;height:20px;line-height:20px;font-size:14.8px;color:#000000;font-family:'Liberation Mono',monospace;letter-spacing:-0.683px;-webkit-text-stroke:0.15px currentColor">{</div>
<div class="t" style="left:727.50px;top:279.06px;height:20px;line-height:20px;font-size:14.8px;color:#0000FF;font-family:'Liberation Mono',monospace;letter-spacing:-0.683px;-webkit-text-stroke:0.15px currentColor">var</div>
<div class="t" style="left:760.30px;top:279.06px;height:20px;line-height:20px;font-size:14.8px;color:#000000;font-family:'Liberation Mono',monospace;letter-spacing:-0.683px;-webkit-text-stroke:0.15px currentColor">tensor = tf.constant(nd);</div>
<div class="t" style="left:727.50px;top:299.06px;height:20px;line-height:20px;font-size:14.8px;color:#000000;font-family:'Liberation Mono',monospace;letter-spacing:-0.683px;-webkit-text-stroke:0.15px currentColor">var data = tensor.ToArray</div>
<div class="t" style="left:694.70px;top:319.06px;height:20px;line-height:20px;font-size:14.8px;color:#000000;font-family:'Liberation Mono',monospace;letter-spacing:-0.683px;-webkit-text-stroke:0.15px currentColor">}</div>
<div class="t" style="left:661.90px;top:338.06px;height:20px;line-height:20px;font-size:14.8px;color:#000000;font-family:'Liberation Mono',monospace;letter-spacing:-0.683px;-webkit-text-stroke:0.15px currentColor">};</div>
<div class="t" style="left:629.10px;top:392.06px;height:20px;line-height:20px;font-size:14.8px;color:#0000FF;font-family:'Liberation Mono',monospace;letter-spacing:-0.683px;-webkit-text-stroke:0.15px currentColor">public</div>
<div class="t" style="left:686.50px;top:392.06px;height:20px;line-height:20px;font-size:14.8px;color:#2B91AF;font-family:'Liberation Mono',monospace;letter-spacing:-0.683px;-webkit-text-stroke:0.15px currentColor">Action</div>
<div class="t" style="left:735.70px;top:392.06px;height:20px;line-height:20px;font-size:14.8px;color:#000000;font-family:'Liberation Mono',monospace;letter-spacing:-0.683px;-webkit-text-stroke:0.15px currentColor">&lt;</div>
<div class="t" style="left:743.90px;top:392.06px;height:20px;line-height:20px;font-size:14.8px;color:#0000FF;font-family:'Liberation Mono',monospace;letter-spacing:-0.683px;-webkit-text-stroke:0.15px currentColor">int</div>
<div class="t" style="left:768.50px;top:392.06px;height:20px;line-height:20px;font-size:14.8px;color:#000000;font-family:'Liberation Mono',monospace;letter-spacing:-0.683px;-webkit-text-stroke:0.15px currentColor">&gt; Variable</div>
<div class="t" style="left:661.90px;top:412.06px;height:20px;line-height:20px;font-size:14.8px;color:#000000;font-family:'Liberation Mono',monospace;letter-spacing:-0.683px;-webkit-text-stroke:0.15px currentColor">=&gt; (iterate) =&gt;</div>
<div class="t" style="left:661.90px;top:431.06px;height:20px;line-height:20px;font-size:14.8px;color:#000000;font-family:'Liberation Mono',monospace;letter-spacing:-0.683px;-webkit-text-stroke:0.15px currentColor">{</div>
<div class="t" style="left:694.70px;top:451.06px;height:20px;line-height:20px;font-size:14.8px;color:#0000FF;font-family:'Liberation Mono',monospace;letter-spacing:-0.683px;-webkit-text-stroke:0.15px currentColor">for</div>
<div class="t" style="left:727.50px;top:451.06px;height:20px;line-height:20px;font-size:14.8px;color:#000000;font-family:'Liberation Mono',monospace;letter-spacing:-0.683px;-webkit-text-stroke:0.15px currentColor">(</div>
<div class="t" style="left:735.70px;top:451.06px;height:20px;line-height:20px;font-size:14.8px;color:#0000FF;font-family:'Liberation Mono',monospace;letter-spacing:-0.683px;-webkit-text-stroke:0.15px currentColor">int</div>
<div class="t" style="left:768.50px;top:451.06px;height:20px;line-height:20px;font-size:14.8px;color:#000000;font-family:'Liberation Mono',monospace;letter-spacing:-0.683px;-webkit-text-stroke:0.15px currentColor">i = 0; i &lt; iterate; i++)</div>
<div class="t" style="left:694.70px;top:470.06px;height:20px;line-height:20px;font-size:14.8px;color:#000000;font-family:'Liberation Mono',monospace;letter-spacing:-0.683px;-webkit-text-stroke:0.15px currentColor">{</div>
<div class="t" style="left:727.50px;top:490.06px;height:20px;line-height:20px;font-size:14.8px;color:#0000FF;font-family:'Liberation Mono',monospace;letter-spacing:-0.683px;-webkit-text-stroke:0.15px currentColor">var</div>
<div class="t" style="left:760.30px;top:490.06px;height:20px;line-height:20px;font-size:14.8px;color:#000000;font-family:'Liberation Mono',monospace;letter-spacing:-0.683px;-webkit-text-stroke:0.15px currentColor">tensor = tf.Variable(3112.0f);</div>
<div class="t" style="left:694.70px;top:509.06px;height:20px;line-height:20px;font-size:14.8px;color:#000000;font-family:'Liberation Mono',monospace;letter-spacing:-0.683px;-webkit-text-stroke:0.15px currentColor">}</div>
<div class="t" style="left:661.10px;top:103.06px;height:20px;line-height:20px;font-size:14.8px;color:#FFFFFF;font-family:'Liberation Mono',monospace;">{</div>
<div class="a" style="left:678px;top:338px;width:1px;height:19px;background:#000000;"></div>
<svg class="a" style="left:704px;top:282px;" width="14" height="12" viewBox="0 0 14 12"><polygon points="1,1 8,6 1,11" fill="#3B9A47"/><rect x="10" y="1" width="1.5" height="10" fill="#3B9A47"/></svg>
<div class="a" style="left:810px;top:296px;width:437px;height:20px;background:#FFFFFF;border:1px solid #8F97B0;box-shadow:2px 2px 3px rgba(0,0,0,0.25)"></div>
<svg class="a" style="left:817px;top:302px;" width="5" height="9" viewBox="0 0 5 9"><polygon points="0.8,1.2 3.9,4.5 0.8,7.8" fill="#FFFFFF" stroke="#404040" stroke-width="1.4"/></svg>
<div class="a" style="left:828px;top:298px;width:417px;height:16px;background:#C6D2F4;"></div>
<svg class="a" style="left:830px;top:300px;" width="12" height="11" viewBox="0 0 12 11"><path d="M0.5,4 Q0.5,3 1.5,2.5 L6,0.5 Q7,0 8,0.5 L10.5,1.8 Q11.5,2.3 11.5,3.3 L11.5,6.5 Q11.5,7.5 10.5,8 L6,10.3 Q5,10.8 4,10.3 L1.5,9 Q0.5,8.5 0.5,7.5 Z" fill="#1E5BAA"/><path d="M3,4 L6.8,2 L8.8,3 L5,5 Z" fill="#FFFFFF"/></svg>
<div class="t" style="left:847.00px;top:295.84px;height:20px;line-height:20px;font-size:12px;color:#1E1E1E;font-family:'Liberation Sans',sans-serif;transform:scaleX(0.9832);transform-origin:0 0;-webkit-text-stroke:0.12px currentColor;">tensor</div>
<div class="a" style="left:898px;top:298px;width:1px;height:16px;background:#9AA6C8;"></div>
<div class="t" style="left:903.00px;top:295.84px;height:20px;line-height:20px;font-size:12px;color:#1E1E1E;font-family:'Liberation Sans',sans-serif;transform:scaleX(0.9809);transform-origin:0 0;-webkit-text-stroke:0.12px currentColor;">{tf.Tensor: shape=(2, 3), dtype=uint8, numpy=[1, 2, 3, 4, 5, 6]}</div>
<svg class="a" style="left:1230px;top:301px;" width="14" height="9" viewBox="0 0 14 9"><path d="M0.5,4.5 H4 M4,1 V8" fill="none" stroke="#6A6A6A" stroke-width="1"/><rect x="4.5" y="2" width="8" height="5" fill="#8C8C8C" stroke="#6A6A6A" stroke-width="1"/></svg>
<div class="a" style="left:1548px;top:45px;width:19px;height:486px;background:#E8E8EC;"></div>
<svg class="a" style="left:1553px;top:51px;" width="9" height="5" viewBox="0 0 9 5"><polygon points="0,5 4.5,0 9,5" fill="#9EA0AC"/></svg>
<svg class="a" style="left:1553px;top:520px;" width="9" height="5" viewBox="0 0 9 5"><polygon points="0,0 9,0 4.5,5" fill="#9EA0AC"/></svg>
<div class="a" style="left:1552px;top:160px;width:11px;height:110px;background:#C2C3C9;"></div>
<div class="a" style="left:1557px;top:170px;width:4px;height:6px;background:#A1343C;"></div>
<div class="a" style="left:1550px;top:192px;width:4px;height:17px;background:#6CE26C;"></div>
<div class="a" style="left:1548px;top:227px;width:19px;height:2px;background:#1010E0;"></div>
<div class="a" style="left:458px;top:531px;width:1109px;height:17px;background:#E8E8EC;"></div>
<div class="a" style="left:458px;top:531px;width:60px;height:17px;background:#FFFFFF;border:1px solid #CCCEDB"></div>
<div class="t" style="left:460.70px;top:529.84px;height:20px;line-height:20px;font-size:12px;color:#1E1E1E;font-family:'Liberation Sans',sans-serif;transform:scaleX(0.8847);transform-origin:0 0;-webkit-text-stroke:0.12px currentColor;">115 %</div>
<svg class="a" style="left:509px;top:538px;" width="6" height="4" viewBox="0 0 6 4"><polygon points="0,0 6,0 3.0,4" fill="#1E1E1E"/></svg>
<svg class="a" style="left:542px;top:535px;" width="12" height="12" viewBox="0 0 12 12"><circle cx="6" cy="5.5" r="5" fill="#1E9A45"/><path d="M3.3,5.6 L5.2,7.5 L8.7,4" fill="none" stroke="#FFFFFF" stroke-width="1.6"/></svg>
<div class="t" style="left:558.20px;top:529.84px;height:20px;line-height:20px;font-size:12px;color:#1E1E1E;font-family:'Liberation Sans',sans-serif;transform:scaleX(0.9658);transform-origin:0 0;-webkit-text-stroke:0.12px currentColor;">No issues found</div>
<div class="a" style="left:700px;top:533px;width:1px;height:13px;background:#C2C2C8;"></div>
<svg class="a" style="left:715px;top:533px;" width="14" height="13" viewBox="0 0 14 13"><path d="M12.3,1 L9.8,3.6" stroke="#424242" stroke-width="1.2"/><path d="M6.6,3.5 A3.2,3.2 0 0 1 11,7.9 Z" fill="#424242"/><path d="M6.2,3.9 L1.2,8.9 L4.8,12.5 L9.8,7.5 Z M3.5,6.6 L7.1,10.2" fill="none" stroke="#424242" stroke-width="1"/></svg>
<svg class="a" style="left:732px;top:538px;" width="6" height="4" viewBox="0 0 6 4"><polygon points="0,0 6,0 3.0,4" fill="#1E1E1E"/></svg>
<svg class="a" style="left:768px;top:535px;" width="5" height="9" viewBox="0 0 5 9"><polygon points="5,0 0,4.5 5,9" fill="#C8C8CC"/></svg>
<svg class="a" style="left:1361px;top:535px;" width="5" height="9" viewBox="0 0 5 9"><polygon points="0,0 5,4.5 0,9" fill="#C8C8CC"/></svg>
<div class="t" style="left:1394.50px;top:529.84px;height:20px;line-height:20px;font-size:12px;color:#1E1E1E;font-family:'Liberation Sans',sans-serif;transform:scaleX(0.8723);transform-origin:0 0;-webkit-text-stroke:0.12px currentColor;">Ln: 37</div>
<div class="t" style="left:1442.60px;top:529.84px;height:20px;line-height:20px;font-size:12px;color:#1E1E1E;font-family:'Liberation Sans',sans-serif;transform:scaleX(0.8857);transform-origin:0 0;-webkit-text-stroke:0.12px currentColor;">Ch: 15</div>
<div class="t" style="left:1493.50px;top:529.84px;height:20px;line-height:20px;font-size:12px;color:#1E1E1E;font-family:'Liberation Sans',sans-serif;transform:scaleX(0.7461);transform-origin:0 0;-webkit-text-stroke:0.12px currentColor;">SPC</div>
<div class="t" style="left:1532.80px;top:529.84px;height:20px;line-height:20px;font-size:12px;color:#1E1E1E;font-family:'Liberation Sans',sans-serif;transform:scaleX(0.7631);transform-origin:0 0;-webkit-text-stroke:0.12px currentColor;">CRLF</div>
<div class="a" style="left:458px;top:556px;width:548px;height:21px;background:#40568F;"></div>
<div class="t" style="left:462.40px;top:557.14px;height:20px;line-height:20px;font-size:12px;color:#FFFFFF;font-family:'Liberation Sans',sans-serif;transform:scaleX(0.9824);transform-origin:0 0;-webkit-text-stroke:0.12px currentColor;">Memory 1</div>
<svg class="a" style="left:958px;top:564px;" width="7" height="4" viewBox="0 0 7 4"><polygon points="0,0 7,0 3.5,4" fill="#B9C3E6"/></svg>
<svg class="a" style="left:974px;top:561px;" width="9" height="13" viewBox="0 0 9 13"><rect x="2.2" y="1.5" width="4.6" height="5.8" fill="none" stroke="#B9C3E6" stroke-width="1.4"/><line x1="0.8" y1="7.6" x2="8.2" y2="7.6" stroke="#B9C3E6" stroke-width="1.2"/><line x1="4.5" y1="7.6" x2="4.5" y2="12.5" stroke="#B9C3E6" stroke-width="1.2"/></svg>
<svg class="a" style="left:990px;top:562px;" width="9" height="9" viewBox="0 0 9 9"><path d="M0.5,0.5 L8.5,8.5 M8.5,0.5 L0.5,8.5" stroke="#B9C3E6" stroke-width="1.3"/></svg>
<div class="a" style="left:458px;top:577px;width:548px;height:26px;background:#CCD5F0;"></div>
<div class="t" style="left:465.40px;top:580.84px;height:20px;line-height:20px;font-size:12px;color:#1E1E1E;font-family:'Liberation Sans',sans-serif;transform:scaleX(0.9294);transform-origin:0 0;-webkit-text-stroke:0.12px currentColor;">Address:</div>
<div class="a" style="left:516px;top:580px;width:443px;height:20px;background:#FFFFFF;border:1px solid #CCCEDB"></div>
<div class="t" style="left:518.50px;top:580.84px;height:20px;line-height:20px;font-size:12px;color:#1E1E1E;font-family:'Liberation Sans',sans-serif;transform:scaleX(0.9000);transform-origin:0 0;-webkit-text-stroke:0.12px currentColor;">0x000002556B194260</div>
<svg class="a" style="left:949px;top:589px;" width="6" height="4" viewBox="0 0 6 4"><polygon points="0,0 6,0 3.0,4" fill="#1E1E1E"/></svg>
<svg class="a" style="left:965px;top:583px;" width="14" height="15" viewBox="0 0 14 15"><path d="M11.8,8 A5,5 0 1 1 8.2,3.2" fill="none" stroke="#0E4F92" stroke-width="2.4"/><polygon points="6.5,0 13,2.8 7.5,7" fill="#0E4F92"/></svg>
<div class="a" style="left:988px;top:581px;width:1px;height:17px;background:#99A4C4;"></div>
<svg class="a" style="left:997px;top:581px;" width="8" height="6" viewBox="0 0 8 6"><polygon points="0.5,0.5 3,2.8 0.5,5" fill="#1E2A44"/><polygon points="4.5,0.5 7,2.8 4.5,5" fill="#1E2A44"/></svg>
<div class="a" style="left:458px;top:603px;width:548px;height:292px;background:#FFFFFF;"></div>
<div class="t" style="left:460px;top:603.8px;height:16px;line-height:16px;font-size:11.9px;letter-spacing:-0.141px;-webkit-text-stroke:0.2px currentColor;color:#000000;font-family:'Liberation Mono',monospace"><span style="color:#8A8A8A">0x000002556B194260</span>  01 02 03 04 05 06 65 00 10 7d 1e b6 00  ......e..}.¶.</div>
<div class="t" style="left:460px;top:619.8px;height:16px;line-height:16px;font-size:11.9px;letter-spacing:-0.141px;-webkit-text-stroke:0.2px currentColor;color:#000000;font-family:'Liberation Mono',monospace"><span style="color:#8A8A8A">0x000002556B19426D</span>  1e 00 88 b0 3f 5f 7f 11 d5 0a 3a 11 7d  ..ˆ°?_..Õ.:.}</div>
<div class="t" style="left:460px;top:635.8px;height:16px;line-height:16px;font-size:11.9px;letter-spacing:-0.141px;-webkit-text-stroke:0.2px currentColor;color:#000000;font-family:'Liberation Mono',monospace"><span style="color:#8A8A8A">0x000002556B19427A</span>  1f b6 55 1f 00 88 50 a0 15 6b 55 02 00  .¶U..ˆP .kU..</div>
<div class="t" style="left:460px;top:651.8px;height:16px;line-height:16px;font-size:11.9px;letter-spacing:-0.141px;-webkit-text-stroke:0.2px currentColor;color:#000000;font-family:'Liberation Mono',monospace"><span style="color:#8A8A8A">0x000002556B194287</span>  00 1e 7d 1c b6 ff 20 00 80 00 00 <span class="r">74</span> <span class="r">6f</span>  ..}.¶ÿ .€..<span class="r">t</span><span class="r">o</span></div>
<div class="t" style="left:460px;top:667.8px;height:16px;line-height:16px;font-size:11.9px;letter-spacing:-0.141px;-webkit-text-stroke:0.2px currentColor;color:#000000;font-family:'Liberation Mono',monospace"><span style="color:#8A8A8A">0x000002556B194294</span>  72 00 00 <span class="r">00</span> 1f 7d 1d b6 00 21 00 8c fe  r..<span class="r">.</span>.}.¶.!.Œþ</div>
<div class="t" style="left:460px;top:683.8px;height:16px;line-height:16px;font-size:11.9px;letter-spacing:-0.141px;-webkit-text-stroke:0.2px currentColor;color:#000000;font-family:'Liberation Mono',monospace"><span style="color:#8A8A8A">0x000002556B1942A1</span>  ff ff ff 00 00 00 00 1c 7d 12 b6 ff 22  ÿÿÿ....}.¶ÿ&quot;</div>
<div class="t" style="left:460px;top:699.8px;height:16px;line-height:16px;font-size:11.9px;letter-spacing:-0.141px;-webkit-text-stroke:0.2px currentColor;color:#000000;font-family:'Liberation Mono',monospace"><span style="color:#8A8A8A">0x000002556B1942AE</span>  00 80 00 00 <span class="r">08</span> <span class="r">0a</span> <span class="r">00</span> <span class="r">74</span> <span class="r">00</span> 3a 1d 7d 13  .€..<span class="r">.</span><span class="r">.</span><span class="r">.</span><span class="r">t</span><span class="r">.</span>:.}.</div>
<div class="t" style="left:460px;top:715.8px;height:16px;line-height:16px;font-size:11.9px;letter-spacing:-0.141px;-webkit-text-stroke:0.2px currentColor;color:#000000;font-family:'Liberation Mono',monospace"><span style="color:#8A8A8A">0x000002556B1942BB</span>  b6 00 23 00 80 <span class="r">00</span> 00 69 00 64 00 00 00  ¶.#.€<span class="r">.</span>.i.d...</div>
<div class="t" style="left:460px;top:731.8px;height:16px;line-height:16px;font-size:11.9px;letter-spacing:-0.141px;-webkit-text-stroke:0.2px currentColor;color:#000000;font-family:'Liberation Mono',monospace"><span style="color:#8A8A8A">0x000002556B1942C8</span>  1a 7d 10 b6 00 24 00 80 00 00 00 00 55  .}.¶.$.€....U</div>
<div class="t" style="left:460px;top:747.8px;height:16px;line-height:16px;font-size:11.9px;letter-spacing:-0.141px;-webkit-text-stroke:0.2px currentColor;color:#000000;font-family:'Liberation Mono',monospace"><span style="color:#8A8A8A">0x000002556B1942D5</span>  02 00 00 1b 7d 11 b6 00 25 00 8c fe ff  ....}.¶.%.Œþÿ</div>
<div class="t" style="left:460px;top:763.8px;height:16px;line-height:16px;font-size:11.9px;letter-spacing:-0.141px;-webkit-text-stroke:0.2px currentColor;color:#000000;font-family:'Liberation Mono',monospace"><span style="color:#8A8A8A">0x000002556B1942E2</span>  ff ff 00 00 00 00 18 7d 16 b6 00 26 00  ÿÿ.....}.¶.&amp;.</div>
<div class="t" style="left:460px;top:779.8px;height:16px;line-height:16px;font-size:11.9px;letter-spacing:-0.141px;-webkit-text-stroke:0.2px currentColor;color:#000000;font-family:'Liberation Mono',monospace"><span style="color:#8A8A8A">0x000002556B1942EF</span>  8c fe ff ff ff 00 00 00 00 19 7d 17 b6  Œþÿÿÿ.....}.¶</div>
<div class="t" style="left:460px;top:795.8px;height:16px;line-height:16px;font-size:11.9px;letter-spacing:-0.141px;-webkit-text-stroke:0.2px currentColor;color:#000000;font-family:'Liberation Mono',monospace"><span style="color:#8A8A8A">0x000002556B1942FC</span>  00 27 00 80 00 00 00 00 72 61 79 00 06  .&#x27;.€....ray..</div>
<div class="t" style="left:460px;top:811.8px;height:16px;line-height:16px;font-size:11.9px;letter-spacing:-0.141px;-webkit-text-stroke:0.2px currentColor;color:#000000;font-family:'Liberation Mono',monospace"><span style="color:#8A8A8A">0x000002556B194309</span>  7d 14 b6 00 28 00 88 b0 3f 5f 7f 11 d5  }.¶.(.ˆ°?_..Õ</div>
<div class="t" style="left:460px;top:827.8px;height:16px;line-height:16px;font-size:11.9px;letter-spacing:-0.141px;-webkit-text-stroke:0.2px currentColor;color:#000000;font-family:'Liberation Mono',monospace"><span style="color:#8A8A8A">0x000002556B194316</span>  0a 3a 07 7d 15 b6 00 29 00 8a 01 02 03  .:.}.¶.).Š...</div>
<div class="t" style="left:460px;top:843.8px;height:16px;line-height:16px;font-size:11.9px;letter-spacing:-0.141px;-webkit-text-stroke:0.2px currentColor;color:#000000;font-family:'Liberation Mono',monospace"><span style="color:#8A8A8A">0x000002556B194323</span>  04 05 06 0a 3a 04 7d 0a b6 00 2a 00 80  ....:.}.¶.*.€</div>
<div class="t" style="left:460px;top:859.8px;height:16px;line-height:16px;font-size:11.9px;letter-spacing:-0.141px;-webkit-text-stroke:0.2px currentColor;color:#000000;font-family:'Liberation Mono',monospace"><span style="color:#8A8A8A">0x000002556B194330</span>  <span class="r">2e</span> <span class="r">63</span> <span class="r">74</span> <span class="r">6f</span> <span class="r">72</span> <span class="r">00</span> 77 00 05 7d 0b b6 00  <span class="r">.</span><span class="r">c</span><span class="r">t</span><span class="r">o</span><span class="r">r</span><span class="r">.</span>w..}.¶.</div>
<div class="t" style="left:460px;top:875.8px;height:16px;line-height:16px;font-size:11.9px;letter-spacing:-0.141px;-webkit-text-stroke:0.2px currentColor;color:#000000;font-family:'Liberation Mono',monospace"><span style="color:#8A8A8A">0x000002556B19433D</span>  2b 00 89 02 03 08 18 0a 0a 00 3a 02 7d  +.........:.}</div>
<div class="a" style="left:989px;top:603px;width:17px;height:292px;background:#E8E8EC;"></div>
<svg class="a" style="left:993px;top:609px;" width="9" height="5" viewBox="0 0 9 5"><polygon points="0,5 4.5,0 9,5" fill="#9EA0AC"/></svg>
<svg class="a" style="left:993px;top:884px;" width="9" height="5" viewBox="0 0 9 5"><polygon points="0,0 9,0 4.5,5" fill="#9EA0AC"/></svg>
<div class="a" style="left:458px;top:895px;width:548px;height:19px;background:#40568F;"></div>
<div class="a" style="left:458px;top:895px;width:63px;height:19px;background:#40568F;border-right:2px solid #56689A"></div>
<div class="t" style="left:463.00px;top:894.64px;height:20px;line-height:20px;font-size:12px;color:#FFFFFF;font-family:'Liberation Sans',sans-serif;transform:scaleX(0.9650);transform-origin:0 0;-webkit-text-stroke:0.12px currentColor;">&#x27;Allocat...</div>
<div class="a" style="left:521px;top:895px;width:62px;height:19px;background:#F5F7FD;"></div>
<div class="t" style="left:526.00px;top:894.64px;height:20px;line-height:20px;font-size:12px;color:#1E1E1E;font-family:'Liberation Sans',sans-serif;transform:scaleX(0.9650);transform-origin:0 0;-webkit-text-stroke:0.12px currentColor;">Memor...</div>
<div class="a" style="left:583px;top:895px;width:63px;height:19px;background:#40568F;border-right:2px solid #56689A"></div>
<div class="t" style="left:588.00px;top:894.64px;height:20px;line-height:20px;font-size:12px;color:#FFFFFF;font-family:'Liberation Sans',sans-serif;transform:scaleX(0.9650);transform-origin:0 0;-webkit-text-stroke:0.12px currentColor;">Call Stack</div>
<div class="a" style="left:646px;top:895px;width:63px;height:19px;background:#40568F;border-right:2px solid #56689A"></div>
<div class="t" style="left:651.00px;top:894.64px;height:20px;line-height:20px;font-size:12px;color:#FFFFFF;font-family:'Liberation Sans',sans-serif;transform:scaleX(0.9650);transform-origin:0 0;-webkit-text-stroke:0.12px currentColor;">Breakp...</div>
<div class="a" style="left:709px;top:895px;width:64px;height:19px;background:#40568F;border-right:2px solid #56689A"></div>
<div class="t" style="left:714.00px;top:894.64px;height:20px;line-height:20px;font-size:12px;color:#FFFFFF;font-family:'Liberation Sans',sans-serif;transform:scaleX(0.9650);transform-origin:0 0;-webkit-text-stroke:0.12px currentColor;">Excepti...</div>
<div class="a" style="left:773px;top:895px;width:64px;height:19px;background:#40568F;border-right:2px solid #56689A"></div>
<div class="t" style="left:778.00px;top:894.64px;height:20px;line-height:20px;font-size:12px;color:#FFFFFF;font-family:'Liberation Sans',sans-serif;transform:scaleX(0.9650);transform-origin:0 0;-webkit-text-stroke:0.12px currentColor;">Comm...</div>
<div class="a" style="left:837px;top:895px;width:62px;height:19px;background:#40568F;border-right:2px solid #56689A"></div>
<div class="t" style="left:842.00px;top:894.64px;height:20px;line-height:20px;font-size:12px;color:#FFFFFF;font-family:'Liberation Sans',sans-serif;transform:scaleX(0.9650);transform-origin:0 0;-webkit-text-stroke:0.12px currentColor;">Immedi...</div>
<div class="a" style="left:899px;top:895px;width:50px;height:19px;background:#40568F;border-right:2px solid #56689A"></div>
<div class="t" style="left:904.00px;top:894.64px;height:20px;line-height:20px;font-size:12px;color:#FFFFFF;font-family:'Liberation Sans',sans-serif;transform:scaleX(0.9650);transform-origin:0 0;-webkit-text-stroke:0.12px currentColor;">Output</div>
<div class="a" style="left:949px;top:895px;width:57px;height:19px;background:#40568F;"></div>
<div class="t" style="left:954.00px;top:894.64px;height:20px;line-height:20px;font-size:12px;color:#FFFFFF;font-family:'Liberation Sans',sans-serif;transform:scaleX(0.9650);transform-origin:0 0;-webkit-text-stroke:0.12px currentColor;">Error List</div>
<div class="a" style="left:1014px;top:556px;width:554px;height:21px;background:#40568F;"></div>
<div class="t" style="left:1018.40px;top:557.14px;height:20px;line-height:20px;font-size:12px;color:#FFFFFF;font-family:'Liberation Sans',sans-serif;transform:scaleX(0.9824);transform-origin:0 0;-webkit-text-stroke:0.12px currentColor;">Memory 2</div>
<svg class="a" style="left:1520px;top:564px;" width="7" height="4" viewBox="0 0 7 4"><polygon points="0,0 7,0 3.5,4" fill="#B9C3E6"/></svg>
<svg class="a" style="left:1536px;top:561px;" width="9" height="13" viewBox="0 0 9 13"><rect x="2.2" y="1.5" width="4.6" height="5.8" fill="none" stroke="#B9C3E6" stroke-width="1.4"/><line x1="0.8" y1="7.6" x2="8.2" y2="7.6" stroke="#B9C3E6" stroke-width="1.2"/><line x1="4.5" y1="7.6" x2="4.5" y2="12.5" stroke="#B9C3E6" stroke-width="1.2"/></svg>
<svg class="a" style="left:1552px;top:562px;" width="9" height="9" viewBox="0 0 9 9"><path d="M0.5,0.5 L8.5,8.5 M8.5,0.5 L0.5,8.5" stroke="#B9C3E6" stroke-width="1.3"/></svg>
<div class="a" style="left:1014px;top:577px;width:554px;height:26px;background:#CCD5F0;"></div>
<div class="t" style="left:1021.40px;top:580.84px;height:20px;line-height:20px;font-size:12px;color:#1E1E1E;font-family:'Liberation Sans',sans-serif;transform:scaleX(0.9294);transform-origin:0 0;-webkit-text-stroke:0.12px currentColor;">Address:</div>
<div class="a" style="left:1072px;top:580px;width:449px;height:20px;background:#FFFFFF;border:1px solid #CCCEDB"></div>
<div class="t" style="left:1074.50px;top:580.84px;height:20px;line-height:20px;font-size:12px;color:#1E1E1E;font-family:'Liberation Sans',sans-serif;transform:scaleX(0.9770);transform-origin:0 0;-webkit-text-stroke:0.12px currentColor;">tensor.TensorDataPointer</div>
<svg class="a" style="left:1511px;top:589px;" width="6" height="4" viewBox="0 0 6 4"><polygon points="0,0 6,0 3.0,4" fill="#1E1E1E"/></svg>
<div class="a" style="left:1524px;top:579px;width:22px;height:22px;background:#FFF0C8;border:1px solid #E2B85C"></div>
<svg class="a" style="left:1527px;top:583px;" width="14" height="15" viewBox="0 0 14 15"><path d="M11.8,8 A5,5 0 1 1 8.2,3.2" fill="none" stroke="#0E4F92" stroke-width="2.4"/><polygon points="6.5,0 13,2.8 7.5,7" fill="#0E4F92"/></svg>
<div class="a" style="left:1550px;top:581px;width:1px;height:17px;background:#99A4C4;"></div>
<svg class="a" style="left:1559px;top:581px;" width="8" height="6" viewBox="0 0 8 6"><polygon points="0.5,0.5 3,2.8 0.5,5" fill="#1E2A44"/><polygon points="4.5,0.5 7,2.8 4.5,5" fill="#1E2A44"/></svg>
<div class="a" style="left:1014px;top:603px;width:554px;height:312px;background:#FFFFFF;"></div>
<div class="t" style="left:1016px;top:603.8px;height:16px;line-height:16px;font-size:11.9px;letter-spacing:-0.141px;-webkit-text-stroke:0.2px currentColor;color:#000000;font-family:'Liberation Mono',monospace"><span style="color:#8A8A8A">0x000002556B0EC400</span>  01 02 03 04 05 06 00 00 00 00 00 00 00  .............</div>
<div class="t" style="left:1016px;top:619.8px;height:16px;line-height:16px;font-size:11.9px;letter-spacing:-0.141px;-webkit-text-stroke:0.2px currentColor;color:#000000;font-family:'Liberation Mono',monospace"><span style="color:#8A8A8A">0x000002556B0EC40D</span>  00 00 00 00 00 00 00 00 00 00 00 77 05  ...........w.</div>
<div class="t" style="left:1016px;top:635.8px;height:16px;line-height:16px;font-size:11.9px;letter-spacing:-0.141px;-webkit-text-stroke:0.2px currentColor;color:#000000;font-family:'Liberation Mono',monospace"><span style="color:#8A8A8A">0x000002556B0EC41A</span>  3b b0 00 ff 00 80 <span class="r">4e</span> 00 <span class="r">75</span> 00 <span class="r">6d</span> 00 <span class="r">53</span>  ;°.ÿ.€<span class="r">N</span>.<span class="r">u</span>.<span class="r">m</span>.<span class="r">S</span></div>
<div class="t" style="left:1016px;top:651.8px;height:16px;line-height:16px;font-size:11.9px;letter-spacing:-0.141px;-webkit-text-stroke:0.2px currentColor;color:#000000;font-family:'Liberation Mono',monospace"><span style="color:#8A8A8A">0x000002556B0EC427</span>  00 <span class="r">68</span> 00 <span class="r">61</span> 00 72 00 70 00 <span class="r">2e</span> 00 <span class="r">42</span> 00  .<span class="r">h</span>.<span class="r">a</span>.r.p.<span class="r">.</span>.<span class="r">B</span>.</div>
<div class="t" style="left:1016px;top:667.8px;height:16px;line-height:16px;font-size:11.9px;letter-spacing:-0.141px;-webkit-text-stroke:0.2px currentColor;color:#000000;font-family:'Liberation Mono',monospace"><span style="color:#8A8A8A">0x000002556B0EC434</span>  <span class="r">61</span> 00 <span class="r">63</span> 00 <span class="r">6b</span> 00 <span class="r">65</span> 00 <span class="r">6e</span> <span class="r">00</span> <span class="r">64</span> <span class="r">00</span> <span class="r">73</span>  <span class="r">a</span>.<span class="r">c</span>.<span class="r">k</span>.<span class="r">e</span>.<span class="r">n</span><span class="r">.</span><span class="r">d</span><span class="r">.</span><span class="r">s</span></div>
<div class="t" style="left:1016px;top:683.8px;height:16px;line-height:16px;font-size:11.9px;letter-spacing:-0.141px;-webkit-text-stroke:0.2px currentColor;color:#000000;font-family:'Liberation Mono',monospace"><span style="color:#8A8A8A">0x000002556B0EC441</span>  00 <span class="r">2e</span> 00 <span class="r">55</span> 00 <span class="r">6e</span> 00 <span class="r">6d</span> 00 <span class="r">61</span> 00 <span class="r">6e</span> 00  .<span class="r">.</span>.<span class="r">U</span>.<span class="r">n</span>.<span class="r">m</span>.<span class="r">a</span>.<span class="r">n</span>.</div>
<div class="t" style="left:1016px;top:699.8px;height:16px;line-height:16px;font-size:11.9px;letter-spacing:-0.141px;-webkit-text-stroke:0.2px currentColor;color:#000000;font-family:'Liberation Mono',monospace"><span style="color:#8A8A8A">0x000002556B0EC44E</span>  <span class="r">61</span> 00 <span class="r">67</span> 00 <span class="r">65</span> 00 64 00 2e 00 <span class="r">41</span> 00 <span class="r">72</span>  <span class="r">a</span>.<span class="r">g</span>.<span class="r">e</span>.d...<span class="r">A</span>.<span class="r">r</span></div>
<div class="t" style="left:1016px;top:715.8px;height:16px;line-height:16px;font-size:11.9px;letter-spacing:-0.141px;-webkit-text-stroke:0.2px currentColor;color:#000000;font-family:'Liberation Mono',monospace"><span style="color:#8A8A8A">0x000002556B0EC45B</span>  00 <span class="r">72</span> 00 <span class="r">61</span> 00 <span class="r">79</span> 00 <span class="r">53</span> 00 <span class="r">6c</span> 00 <span class="r">69</span> 00  .<span class="r">r</span>.<span class="r">a</span>.<span class="r">y</span>.<span class="r">S</span>.<span class="r">l</span>.<span class="r">i</span>.</div>
<div class="t" style="left:1016px;top:731.8px;height:16px;line-height:16px;font-size:11.9px;letter-spacing:-0.141px;-webkit-text-stroke:0.2px currentColor;color:#000000;font-family:'Liberation Mono',monospace"><span style="color:#8A8A8A">0x000002556B0EC468</span>  <span class="r">63</span> 00 <span class="r">65</span> 00 00 00 00 00 <span class="r">29</span> 00 00 00 00  <span class="r">c</span>.<span class="r">e</span>.....<span class="r">)</span>....</div>
<div class="t" style="left:1016px;top:747.8px;height:16px;line-height:16px;font-size:11.9px;letter-spacing:-0.141px;-webkit-text-stroke:0.2px currentColor;color:#000000;font-family:'Liberation Mono',monospace"><span style="color:#8A8A8A">0x000002556B0EC475</span>  00 00 00 71 05 3d b0 00 00 01 80 00 00  ...q.=°...€..</div>
<div class="t" style="left:1016px;top:763.8px;height:16px;line-height:16px;font-size:11.9px;letter-spacing:-0.141px;-webkit-text-stroke:0.2px currentColor;color:#000000;font-family:'Liberation Mono',monospace"><span style="color:#8A8A8A">0x000002556B0EC482</span>  00 00 00 00 00 00 00 00 00 00 00 00 00  .............</div>
<div class="t" style="left:1016px;top:779.8px;height:16px;line-height:16px;font-size:11.9px;letter-spacing:-0.141px;-webkit-text-stroke:0.2px currentColor;color:#000000;font-family:'Liberation Mono',monospace"><span style="color:#8A8A8A">0x000002556B0EC48F</span>  00 00 00 00 00 00 00 00 00 00 00 00 00  .............</div>
<div class="t" style="left:1016px;top:795.8px;height:16px;line-height:16px;font-size:11.9px;letter-spacing:-0.141px;-webkit-text-stroke:0.2px currentColor;color:#000000;font-family:'Liberation Mono',monospace"><span style="color:#8A8A8A">0x000002556B0EC49C</span>  00 00 00 00 00 00 00 00 00 00 00 00 00  .............</div>
<div class="t" style="left:1016px;top:811.8px;height:16px;line-height:16px;font-size:11.9px;letter-spacing:-0.141px;-webkit-text-stroke:0.2px currentColor;color:#000000;font-family:'Liberation Mono',monospace"><span style="color:#8A8A8A">0x000002556B0EC4A9</span>  00 00 00 00 00 00 00 00 00 00 00 00 00  .............</div>
<div class="t" style="left:1016px;top:827.8px;height:16px;line-height:16px;font-size:11.9px;letter-spacing:-0.141px;-webkit-text-stroke:0.2px currentColor;color:#000000;font-family:'Liberation Mono',monospace"><span style="color:#8A8A8A">0x000002556B0EC4B6</span>  00 00 a0 4c 0f 6b 55 02 00 00 b0 7d fa  .. L.kU...°}ú</div>
<div class="t" style="left:1016px;top:843.8px;height:16px;line-height:16px;font-size:11.9px;letter-spacing:-0.141px;-webkit-text-stroke:0.2px currentColor;color:#000000;font-family:'Liberation Mono',monospace"><span style="color:#8A8A8A">0x000002556B0EC4C3</span>  1d ff 7f 00 00 b0 7d fa 1d ff 7f 00 00  .ÿ...°}ú.ÿ...</div>
<div class="t" style="left:1016px;top:859.8px;height:16px;line-height:16px;font-size:11.9px;letter-spacing:-0.141px;-webkit-text-stroke:0.2px currentColor;color:#000000;font-family:'Liberation Mono',monospace"><span style="color:#8A8A8A">0x000002556B0EC4D0</span>  00 00 00 00 00 00 00 00 7b 05 37 b0 00  ........{.7°.</div>
<div class="t" style="left:1016px;top:875.8px;height:16px;line-height:16px;font-size:11.9px;letter-spacing:-0.141px;-webkit-text-stroke:0.2px currentColor;color:#000000;font-family:'Liberation Mono',monospace"><span style="color:#8A8A8A">0x000002556B0EC4DD</span>  01 01 80 98 2a f0 1b ff 7f 00 00 20 4d  ..€˜*ð.ÿ... M</div>
<div class="t" style="left:1016px;top:891.8px;height:16px;line-height:16px;font-size:11.9px;letter-spacing:-0.141px;-webkit-text-stroke:0.2px currentColor;color:#000000;font-family:'Liberation Mono',monospace"><span style="color:#8A8A8A">0x000002556B0EC4EA</span>  99 1b ff 7f 00 00 00 00 00 00 00 00 00  ™.ÿ..........</div>
<div class="t" style="left:1016px;top:907.8px;height:16px;line-height:16px;font-size:11.9px;letter-spacing:-0.141px;-webkit-text-stroke:0.2px currentColor;color:#000000;font-family:'Liberation Mono',monospace"><span style="color:#8A8A8A">0x000002556B0EC4F7</span>  00 00 00 00 00 00 00 00 00 00 00 00 00  .............</div>
<div class="a" style="left:1551px;top:603px;width:17px;height:312px;background:#E8E8EC;"></div>
<svg class="a" style="left:1555px;top:609px;" width="9" height="5" viewBox="0 0 9 5"><polygon points="0,5 4.5,0 9,5" fill="#9EA0AC"/></svg>
<svg class="a" style="left:1555px;top:904px;" width="9" height="5" viewBox="0 0 9 5"><polygon points="0,0 9,0 4.5,5" fill="#9EA0AC"/></svg>
<svg class="a" style="left:596px;top:615px;" width="128" height="8" viewBox="0 0 128 8"><defs><filter id="s2"><feGaussianBlur stdDeviation="0.8"/></filter></defs><path d="M2,3.5 H122" stroke="#000" stroke-opacity="0.3" stroke-width="1.6" filter="url(#s2)" transform="translate(1.5,1.5)"/><path d="M2,2.5 Q60,3.5 122,2.5" stroke="#E81123" stroke-width="1.6" fill="none"/></svg>
<svg class="a" style="left:1152px;top:615px;" width="128" height="8" viewBox="0 0 128 8"><path d="M2,3.5 H122" stroke="#000" stroke-opacity="0.3" stroke-width="1.6" filter="url(#s2)" transform="translate(1.5,1.5)"/><path d="M2,2.5 Q60,3.5 122,2.5" stroke="#E81123" stroke-width="1.6" fill="none"/></svg>
</body></html>
